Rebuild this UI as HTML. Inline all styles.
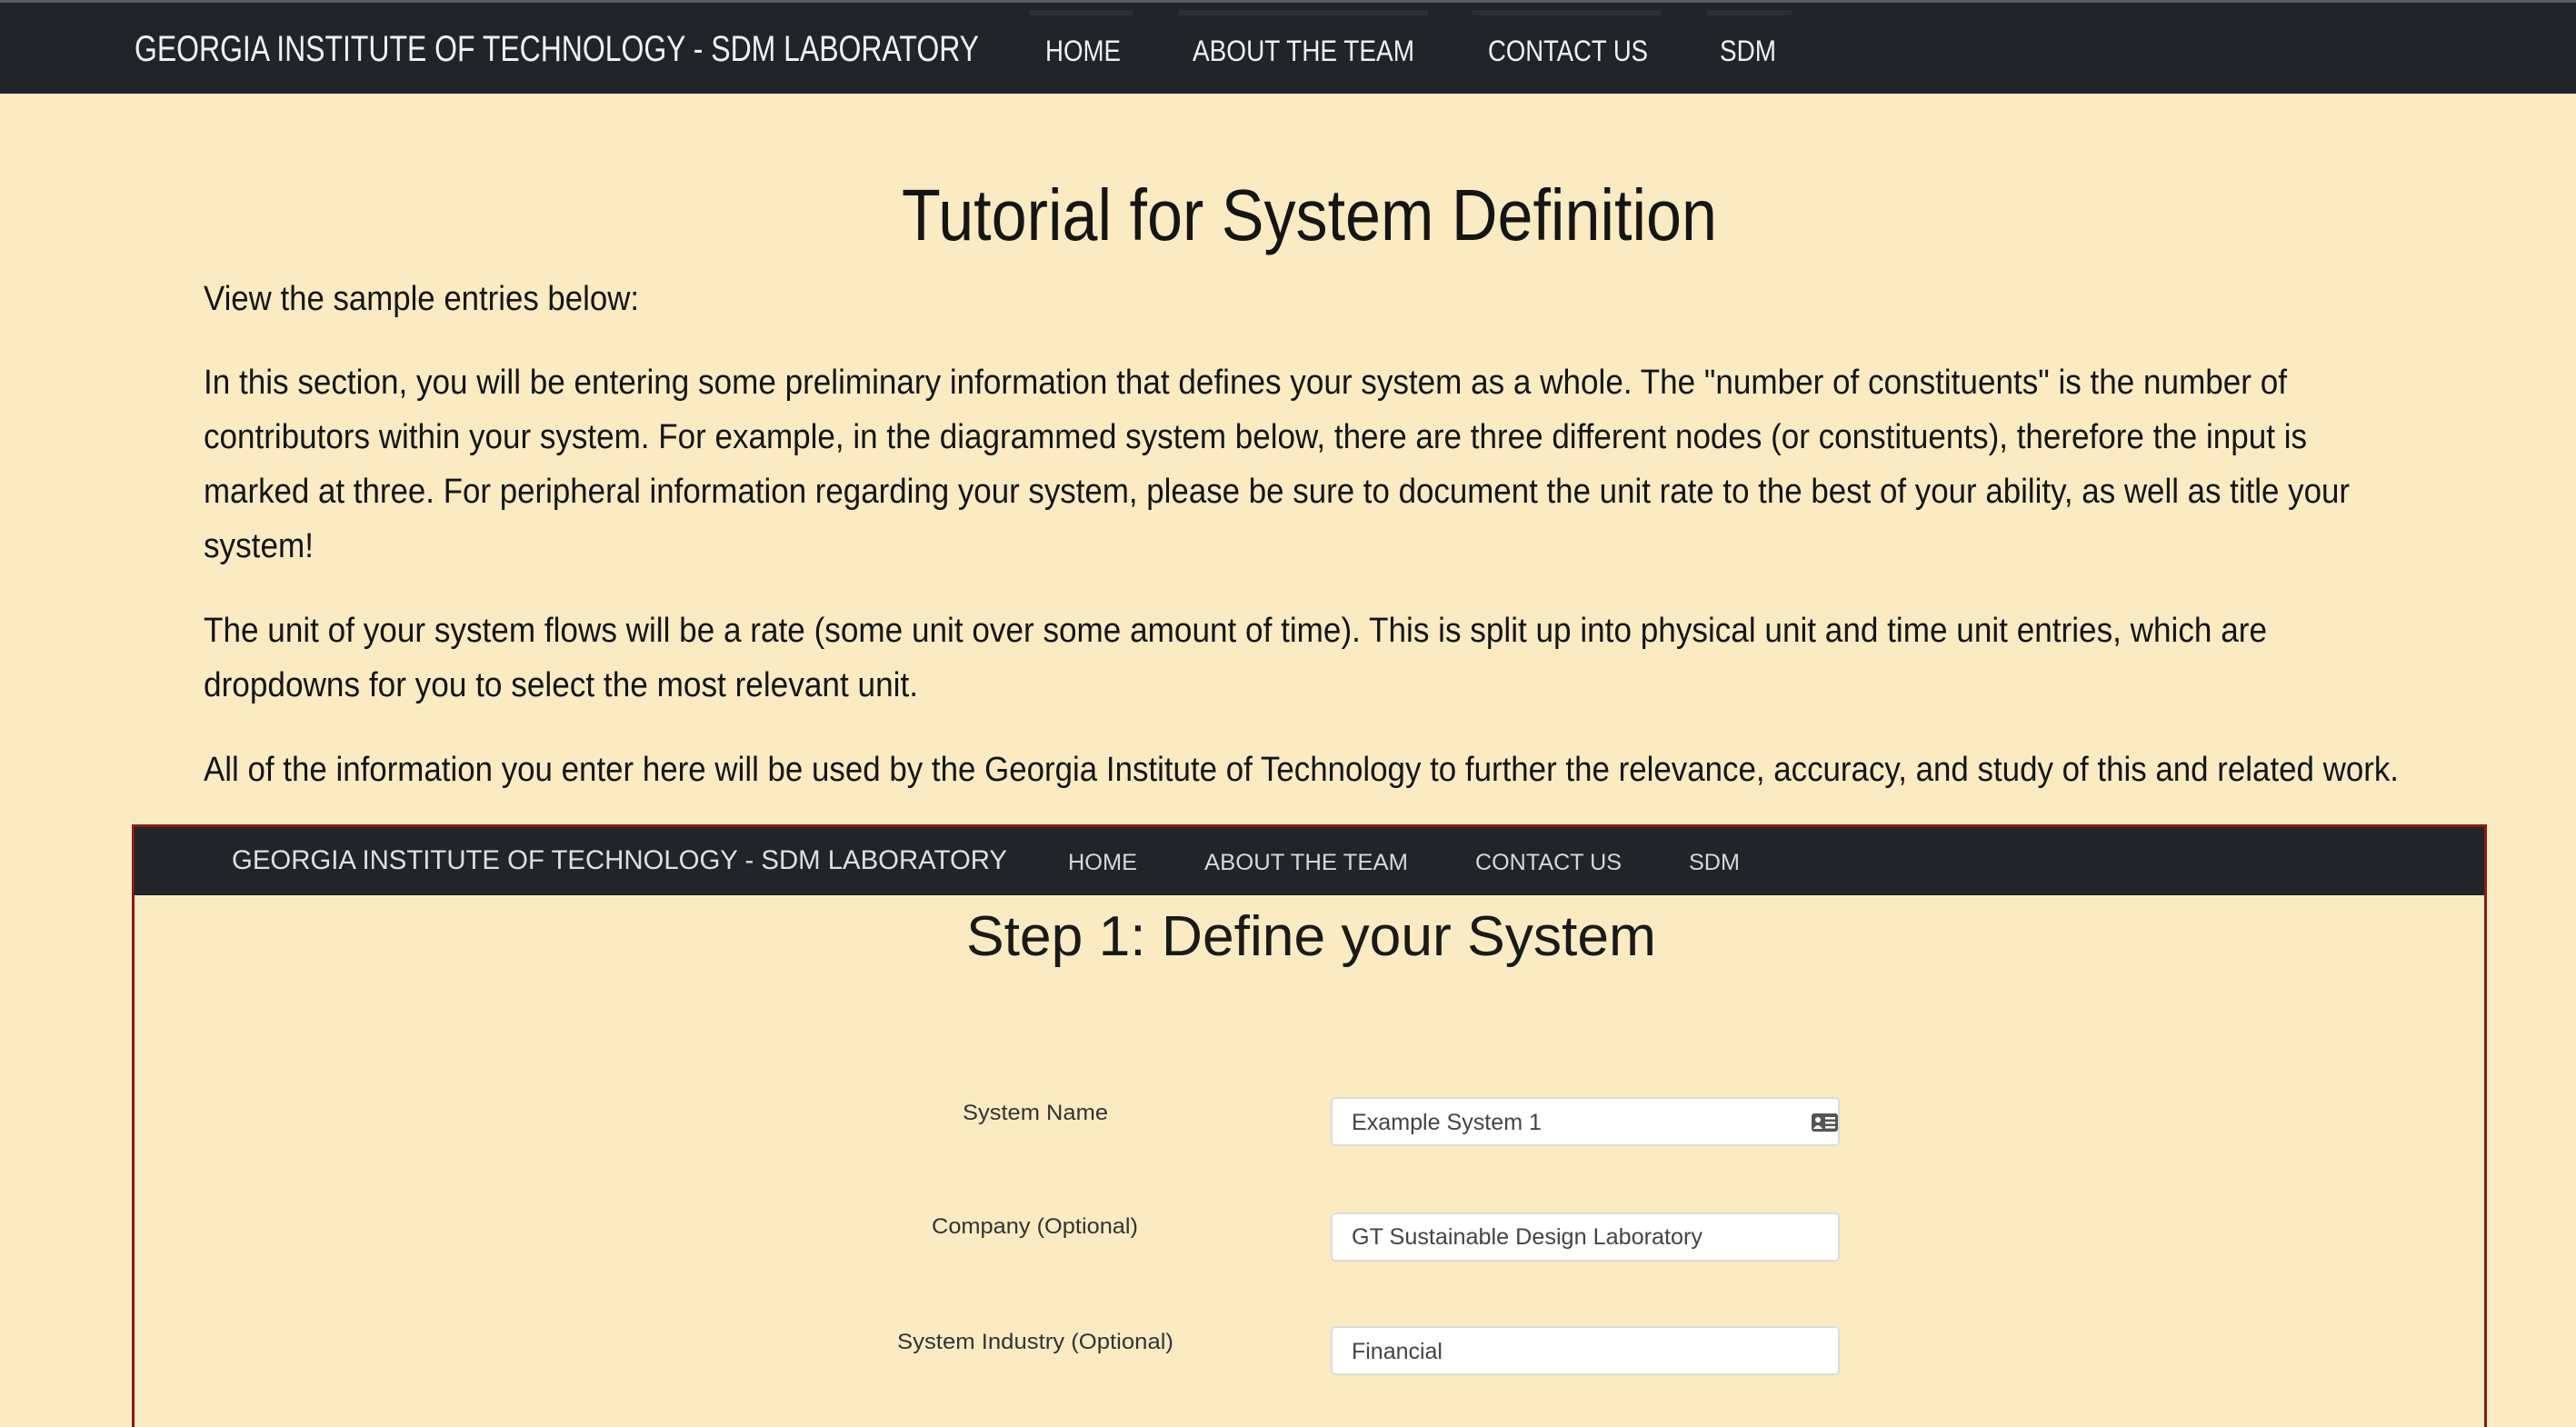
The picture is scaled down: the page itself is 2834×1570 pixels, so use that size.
<!DOCTYPE html>
<html><head><meta charset="utf-8"><style>
html,body{margin:0;padding:0}
body{width:2834px;height:1552px;background:#fbebc3;position:relative;overflow:hidden;font-family:"Liberation Sans",sans-serif;color:#151515}
.a{position:absolute;white-space:nowrap;transform-origin:0 50%;line-height:1}
.nav{position:absolute;left:0;top:0;width:2834px;height:103px;background:#212428}
.topline{position:absolute;left:0;top:0;width:2834px;height:3px;background:#5b5e62}
.tab{position:absolute;top:11px;height:6px;background:#2b2e32}
.w{color:#f2f2f2}
.box{position:absolute;left:145px;top:907px;width:2585px;height:660px;border:3px solid #8a1c14;border-bottom:none}
.inav{position:absolute;left:148px;top:910px;width:2585px;height:75px;background:#212428}
.inp{position:absolute;left:1464px;width:560px;height:54px;background:#fff;border:2px solid #dcdcdc;border-radius:5px;box-sizing:border-box}
.g{color:#444}
</style></head><body>
<div class="nav"></div><div class="topline"></div>
<div class="tab" style="left:1133px;width:113px"></div>
<div class="tab" style="left:1296px;width:275px"></div>
<div class="tab" style="left:1620px;width:208px"></div>
<div class="tab" style="left:1877px;width:94px"></div>
<div class="a w" data-t="148,929" style="top:34px;font-size:40px">GEORGIA INSTITUTE OF TECHNOLOGY - SDM LABORATORY</div>
<div class="a w" data-t="1150,83" style="top:40px;font-size:32px">HOME</div>
<div class="a w" data-t="1312,244" style="top:40px;font-size:32px">ABOUT THE TEAM</div>
<div class="a w" data-t="1637,176" style="top:40px;font-size:32px">CONTACT US</div>
<div class="a w" data-t="1892,62" style="top:40px;font-size:32px">SDM</div>

<div class="a" data-t="992,897" style="top:197px;font-size:80px">Tutorial for System Definition</div>
<div class="a" data-t="224,479" style="top:310px;font-size:38px">View the sample entries below:</div>
<div class="a" data-t="224,2292" style="top:402px;font-size:38px">In this section, you will be entering some preliminary information that defines your system as a whole. The "number of constituents" is the number of</div>
<div class="a" data-t="224,2314" style="top:462px;font-size:38px">contributors within your system. For example, in the diagrammed system below, there are three different nodes (or constituents), therefore the input is</div>
<div class="a" data-t="224,2361" style="top:522px;font-size:38px">marked at three. For peripheral information regarding your system, please be sure to document the unit rate to the best of your ability, as well as title your</div>
<div class="a" data-t="224,121" style="top:582px;font-size:38px">system!</div>
<div class="a" data-t="224,2270" style="top:675px;font-size:38px">The unit of your system flows will be a rate (some unit over some amount of time). This is split up into physical unit and time unit entries, which are</div>
<div class="a" data-t="224,786" style="top:735px;font-size:38px">dropdowns for you to select the most relevant unit.</div>
<div class="a" data-t="224,2415" style="top:828px;font-size:38px">All of the information you enter here will be used by the Georgia Institute of Technology to further the relevance, accuracy, and study of this and related work.</div>

<div class="box"></div>
<div class="inav"></div>
<div class="a w" data-t="255,853" style="top:932px;font-size:30px;color:#e0e0e0">GEORGIA INSTITUTE OF TECHNOLOGY - SDM LABORATORY</div>
<div class="a w" data-t="1175,76" style="top:937px;font-size:25px;color:#d8d8d8">HOME</div>
<div class="a w" data-t="1325,224" style="top:937px;font-size:25px;color:#d8d8d8">ABOUT THE TEAM</div>
<div class="a w" data-t="1623,161" style="top:937px;font-size:25px;color:#d8d8d8">CONTACT US</div>
<div class="a w" data-t="1858,56" style="top:937px;font-size:25px;color:#d8d8d8">SDM</div>
<div class="a" data-t="1063,759" style="top:1000px;font-size:62px;color:#1a1a1a">Step 1: Define your System</div>

<div class="a" data-t="1059,160" style="top:1213px;font-size:24px;color:#333">System Name</div>
<div class="a" data-t="1025,227" style="top:1338px;font-size:24px;color:#333">Company (Optional)</div>
<div class="a" data-t="987,304" style="top:1465px;font-size:24px;color:#333">System Industry (Optional)</div>

<div class="inp" style="top:1207px"></div>
<div class="inp" style="top:1334px"></div>
<div class="inp" style="top:1459px"></div>
<div class="a g" data-t="1487,209" style="top:1223px;font-size:25px">Example System 1</div>
<div class="a g" data-t="1487,386" style="top:1349px;font-size:25px">GT Sustainable Design Laboratory</div>
<div class="a g" data-t="1487,100" style="top:1475px;font-size:25px">Financial</div>
<svg style="position:absolute;left:1993px;top:1225px" width="29" height="20" viewBox="0 0 29 20"><rect x="0" y="0" width="29" height="20" rx="3" fill="#555"/><circle cx="7" cy="7" r="3" fill="#fff"/><path d="M2 17 Q7 9 12 17Z" fill="#fff"/><rect x="15" y="4" width="11" height="2.5" fill="#fff"/><rect x="15" y="9" width="11" height="2.5" fill="#fff"/><rect x="15" y="14" width="11" height="2.5" fill="#fff"/></svg>
<script>
document.querySelectorAll('[data-t]').forEach(function(e){var p=e.getAttribute('data-t').split(',');e.style.left=p[0]+'px';var w=e.getBoundingClientRect().width;e.style.transform='scaleX('+(p[1]/w)+')';});
</script>
</body></html>
